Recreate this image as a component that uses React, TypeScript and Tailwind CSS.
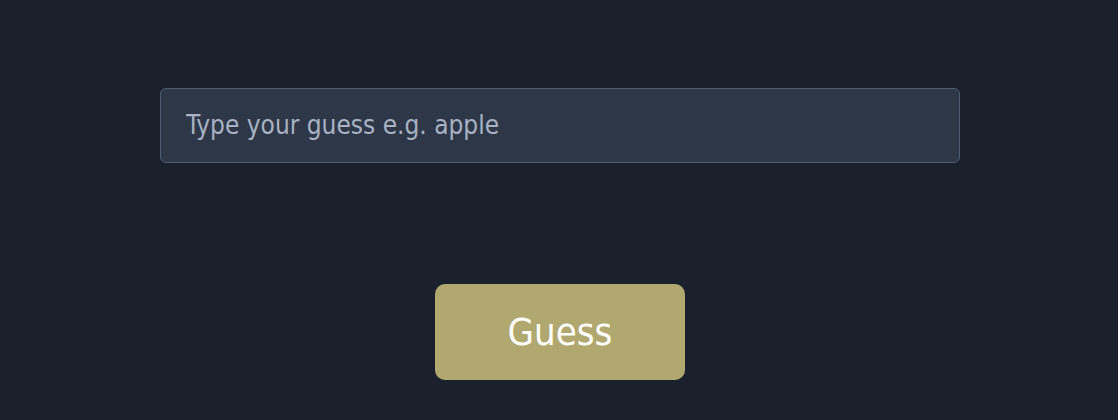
import React from 'react';

export default function App() {
  return (
    <div className="flex h-[420px] w-full flex-col items-center bg-[#1a202c] pl-[2px] pt-[88px] font-['DejaVu_Sans_Condensed','DejaVu_Sans',sans-serif]">
      <input
        type="text"
        placeholder="Type your guess e.g. apple"
        className="h-[75px] w-[800px] rounded-md border border-[#4f5d73] bg-[#2d3748] px-[25px] pb-[2px] font-['DejaVu_Sans_Condensed','DejaVu_Sans',sans-serif] text-[26px] font-medium text-white outline-none placeholder:text-[#a8b2c2]"
      />
      <button
        type="button"
        className="mt-[121px] h-[96px] w-[250px] rounded-[10px] bg-[#b0a86e] font-['DejaVu_Sans_Condensed','DejaVu_Sans',sans-serif] text-[38px] font-medium text-white"
      >
        Guess
      </button>
    </div>
  );
}
